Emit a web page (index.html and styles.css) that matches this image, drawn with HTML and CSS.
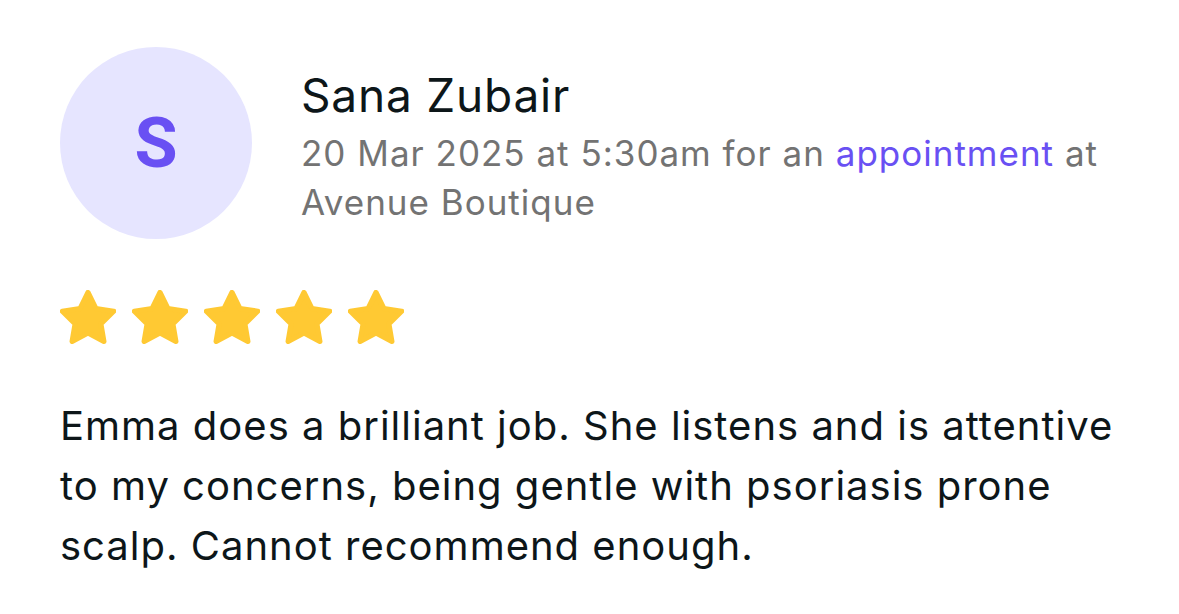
FILE: index.html
```html
<!DOCTYPE html>
<html>
<head>
<meta charset="utf-8">
<link rel="stylesheet" href="styles.css">
</head>
<body>
<div class="review">
  <div class="header">
    <div class="avatar">S</div>
    <div class="meta">
      <div class="name">Sana Zubair</div>
      <div class="info">20 Mar 2025 at 5:30am for an <span class="link">appointment</span> at Avenue Boutique</div>
    </div>
  </div>
  <div class="stars">
    <svg class="star" viewBox="2.3 2 19.4 18.6"><path d="M12 2.8l2.75 5.6 6.15.9-4.45 4.35 1.05 6.1L12 16.85 6.5 19.75l1.05-6.1L3.1 9.3l6.15-.9z"/></svg>
    <svg class="star" viewBox="2.3 2 19.4 18.6"><path d="M12 2.8l2.75 5.6 6.15.9-4.45 4.35 1.05 6.1L12 16.85 6.5 19.75l1.05-6.1L3.1 9.3l6.15-.9z"/></svg>
    <svg class="star" viewBox="2.3 2 19.4 18.6"><path d="M12 2.8l2.75 5.6 6.15.9-4.45 4.35 1.05 6.1L12 16.85 6.5 19.75l1.05-6.1L3.1 9.3l6.15-.9z"/></svg>
    <svg class="star" viewBox="2.3 2 19.4 18.6"><path d="M12 2.8l2.75 5.6 6.15.9-4.45 4.35 1.05 6.1L12 16.85 6.5 19.75l1.05-6.1L3.1 9.3l6.15-.9z"/></svg>
    <svg class="star" viewBox="2.3 2 19.4 18.6"><path d="M12 2.8l2.75 5.6 6.15.9-4.45 4.35 1.05 6.1L12 16.85 6.5 19.75l1.05-6.1L3.1 9.3l6.15-.9z"/></svg>
  </div>
  <p class="text">Emma does a brilliant job. She listens and is attentive to my concerns, being gentle with psoriasis prone scalp. Cannot recommend enough.</p>
</div>
</body>
</html>
```
FILE: styles.css
```css
html, body {
  margin: 0;
  background: #ffffff;
}
body {
  font-family: Inter, "Noto Sans", sans-serif;
  color: #0d1619;
}
.review {
  padding: 47px 60px 0 60px;
  width: 1070px;
}
.header {
  display: flex;
  gap: 49px;
  align-items: flex-start;
}
.avatar {
  flex: 0 0 192px;
  width: 192px;
  height: 192px;
  border-radius: 50%;
  background: #e6e5ff;
  color: #6950f3;
  font-family: Roboto, Inter, sans-serif;
  font-weight: 700;
  font-size: 70px;
  display: flex;
  align-items: center;
  justify-content: center;
}
.meta {
  padding-top: 20px;
}
.name {
  font-size: 46px;
  line-height: 56px;
  letter-spacing: 0.8px;
  color: #0d1619;
}
.info {
  font-size: 35px;
  line-height: 49px;
  letter-spacing: 1px;
  color: #737373;
  margin-top: 6px;
}
.link {
  color: #6950f3;
}
.stars {
  display: flex;
  gap: 16px;
  margin-top: 51px;
}
.star {
  width: 56px;
  height: 54px;
  fill: #ffc933;
  stroke: #ffc933;
  stroke-width: 1.8;
  stroke-linejoin: round;
}
.text {
  margin: 52px 0 0 0;
  font-size: 40px;
  line-height: 60px;
  letter-spacing: 1px;
  color: #0d1619;
}
```
